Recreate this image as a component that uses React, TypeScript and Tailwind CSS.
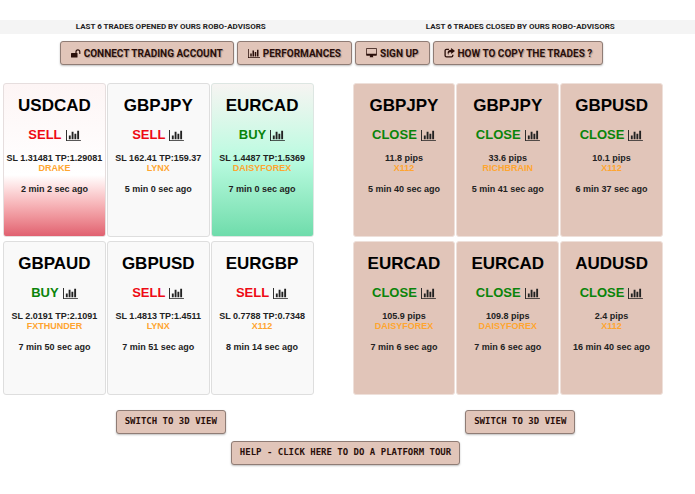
interface Trade {
  pair: string
  action: 'SELL' | 'BUY' | 'CLOSE'
  detail: string
  advisor: string
  ago: string
  style: string
}

const plain = 'bg-[#f9f9f9] border-[#dedede]'
const closed = 'bg-[#e1c5b9] border-[#eee0da]'

const openedTrades: Trade[] = [
  {
    pair: 'USDCAD',
    action: 'SELL',
    detail: 'SL 1.31481 TP:1.29081',
    advisor: 'DRAKE',
    ago: '2 min 2 sec ago',
    style: 'bg-linear-to-b from-[#fdf5f5] via-white via-60% to-[#e06070] border-[#e6dede]',
  },
  { pair: 'GBPJPY', action: 'SELL', detail: 'SL 162.41 TP:159.37', advisor: 'LYNX', ago: '5 min 0 sec ago', style: plain },
  {
    pair: 'EURCAD',
    action: 'BUY',
    detail: 'SL 1.4487 TP:1.5369',
    advisor: 'DAISYFOREX',
    ago: '7 min 0 sec ago',
    style: 'bg-linear-to-b from-[#f6f4f2] via-[#b9fbe0] via-50% to-[#6edcab] border-[#dde6e2]',
  },
  { pair: 'GBPAUD', action: 'BUY', detail: 'SL 2.0191 TP:2.1091', advisor: 'FXTHUNDER', ago: '7 min 50 sec ago', style: plain },
  { pair: 'GBPUSD', action: 'SELL', detail: 'SL 1.4813 TP:1.4511', advisor: 'LYNX', ago: '7 min 51 sec ago', style: plain },
  { pair: 'EURGBP', action: 'SELL', detail: 'SL 0.7788 TP:0.7348', advisor: 'X112', ago: '8 min 14 sec ago', style: plain },
]

const closedTrades: Trade[] = [
  { pair: 'GBPJPY', action: 'CLOSE', detail: '11.8 pips', advisor: 'X112', ago: '5 min 40 sec ago', style: closed },
  { pair: 'GBPJPY', action: 'CLOSE', detail: '33.6 pips', advisor: 'RICHBRAIN', ago: '5 min 41 sec ago', style: closed },
  { pair: 'GBPUSD', action: 'CLOSE', detail: '10.1 pips', advisor: 'X112', ago: '6 min 37 sec ago', style: closed },
  { pair: 'EURCAD', action: 'CLOSE', detail: '105.9 pips', advisor: 'DAISYFOREX', ago: '7 min 6 sec ago', style: closed },
  { pair: 'EURCAD', action: 'CLOSE', detail: '109.8 pips', advisor: 'DAISYFOREX', ago: '7 min 6 sec ago', style: closed },
  { pair: 'AUDUSD', action: 'CLOSE', detail: '2.4 pips', advisor: 'X112', ago: '16 min 40 sec ago', style: closed },
]

const buttonBase =
  'h-6 rounded-[3px] border border-[#8f7c75] bg-[#e1c5b9] font-bold text-[#2a0f0a] shadow-[0_1px_2px_rgba(0,0,0,0.25)] whitespace-nowrap cursor-pointer'
const navButton = `${buttonBase} flex items-center gap-[3px] px-[10px] font-[Roboto,sans-serif] text-[10px] text-shadow-[1px_1px_1px_rgba(0,0,0,0.25)]`
const monoButton = `${buttonBase} px-2 font-['DejaVu_Sans_Mono',monospace] text-[9px]`

function ChartIcon({ className }: { className: string }) {
  return (
    <svg viewBox="0 0 2048 1792" fill="currentColor" className={className} aria-hidden="true">
      <path d="M640 896v512h-256v-512h256zm384-512v1024h-256v-1024h256zm1024 1152v128h-2048v-1536h128v1408h1920zm-640-896v768h-256v-768h256zm384-384v1152h-256v-1152h256z" />
    </svg>
  )
}

function UnlockIcon() {
  return (
    <svg viewBox="0 0 20 18" className="w-[10px] h-[9px]" aria-hidden="true">
      <rect x="0" y="8" width="13" height="9" rx="1" fill="currentColor" />
      <path d="M10 8V5.5a3.8 3.8 0 0 1 7.6 0V9" fill="none" stroke="currentColor" strokeWidth="2.4" strokeLinecap="round" />
    </svg>
  )
}

function DesktopIcon() {
  return (
    <svg viewBox="0 0 1920 1792" fill="currentColor" className="w-[11px] h-[10px]" aria-hidden="true">
      <path d="M1792 992v-832q0-13-9.5-22.5t-22.5-9.5h-1600q-13 0-22.5 9.5t-9.5 22.5v832q0 13 9.5 22.5t22.5 9.5h1600q13 0 22.5-9.5t9.5-22.5zm128-832v1088q0 66-47 113t-113 47h-544q0 37 16 77.5t32 71 16 43.5q0 26-19 45t-45 19h-512q-26 0-45-19t-19-45q0-14 16-44t32-70 16-78h-544q-66 0-113-47t-47-113v-1088q0-66 47-113t113-47h1600q66 0 113 47t47 113z" />
    </svg>
  )
}

function ShareIcon() {
  return (
    <svg viewBox="0 0 20 18" className="w-[11px] h-[10px]" aria-hidden="true">
      <path d="M9 2.5H4.5A2.5 2.5 0 0 0 2 5v8.5A2.5 2.5 0 0 0 4.5 16h9a2.5 2.5 0 0 0 2.5-2.5V12" fill="none" stroke="currentColor" strokeWidth="2.4" />
      <path d="M13 0l7 5.5-7 5.5V7.8c-3.5 0-5.2 1-5 4.7C5 8 7 3.5 13 3.300z" fill="currentColor" />
    </svg>
  )
}

function TradeCard({ trade }: { trade: Trade }) {
  return (
    <article className={`h-[154px] rounded-[3px] border pt-3 text-center whitespace-nowrap ${trade.style}`}>
      <h3 className="text-[17px] leading-5 font-bold text-black">{trade.pair}</h3>
      <p className="mt-2 flex items-center justify-center gap-1 text-[13px] leading-[22px] font-bold">
        <span className={trade.action === 'SELL' ? 'text-[#ee0a14]' : 'text-[#0a840a]'}>{trade.action}</span>
        <ChartIcon className="w-[15px] h-[13px] text-[#222]" />
      </p>
      <p className="mt-[7px] text-[9px] leading-[10px] font-bold text-[#222]">{trade.detail}</p>
      <p className="text-[9px] leading-[10px] font-bold text-[#ffa530]">{trade.advisor}</p>
      <p className="mt-[11px] text-[9px] leading-[10px] font-bold text-[#222]">{trade.ago}</p>
    </article>
  )
}

function TradePanel({ trades }: { trades: Trade[] }) {
  return (
    <section>
      <div className="grid grid-cols-3 gap-x-px gap-y-1 pl-[7px] pr-8">
        {trades.map((trade, i) => (
          <TradeCard key={i} trade={trade} />
        ))}
      </div>
      <div className="mt-[15px] flex justify-center">
        <button type="button" className={monoButton}>SWITCH TO 3D VIEW</button>
      </div>
    </section>
  )
}

export default function App() {
  return (
    <main className="-ml-1 overflow-hidden bg-white pt-5 font-['Liberation_Sans',Arial,sans-serif]">
      <div className="grid grid-cols-2 bg-[#f4f4f4] text-center font-[Roboto,sans-serif] text-[8px] leading-[14px] font-bold text-[#222]">
        <h2>LAST 6 TRADES OPENED BY OURS ROBO-ADVISORS</h2>
        <h2>LAST 6 TRADES CLOSED BY OURS ROBO-ADVISORS</h2>
      </div>

      <nav className="mt-[7px] flex justify-center gap-[3px] pr-7">
        <button type="button" className={navButton}>
          <UnlockIcon />
          CONNECT TRADING ACCOUNT
        </button>
        <button type="button" className={navButton}>
          <ChartIcon className="w-3 h-[11px]" />
          PERFORMANCES
        </button>
        <button type="button" className={navButton}>
          <DesktopIcon />
          SIGN UP
        </button>
        <button type="button" className={navButton}>
          <ShareIcon />
          HOW TO COPY THE TRADES ?
        </button>
      </nav>

      <div className="mt-[18px] grid grid-cols-2">
        <TradePanel trades={openedTrades} />
        <TradePanel trades={closedTrades} />
      </div>

      <div className="mt-[7px] flex justify-center pb-8">
        <button type="button" className={monoButton}>HELP - CLICK HERE TO DO A PLATFORM TOUR</button>
      </div>
    </main>
  )
}
